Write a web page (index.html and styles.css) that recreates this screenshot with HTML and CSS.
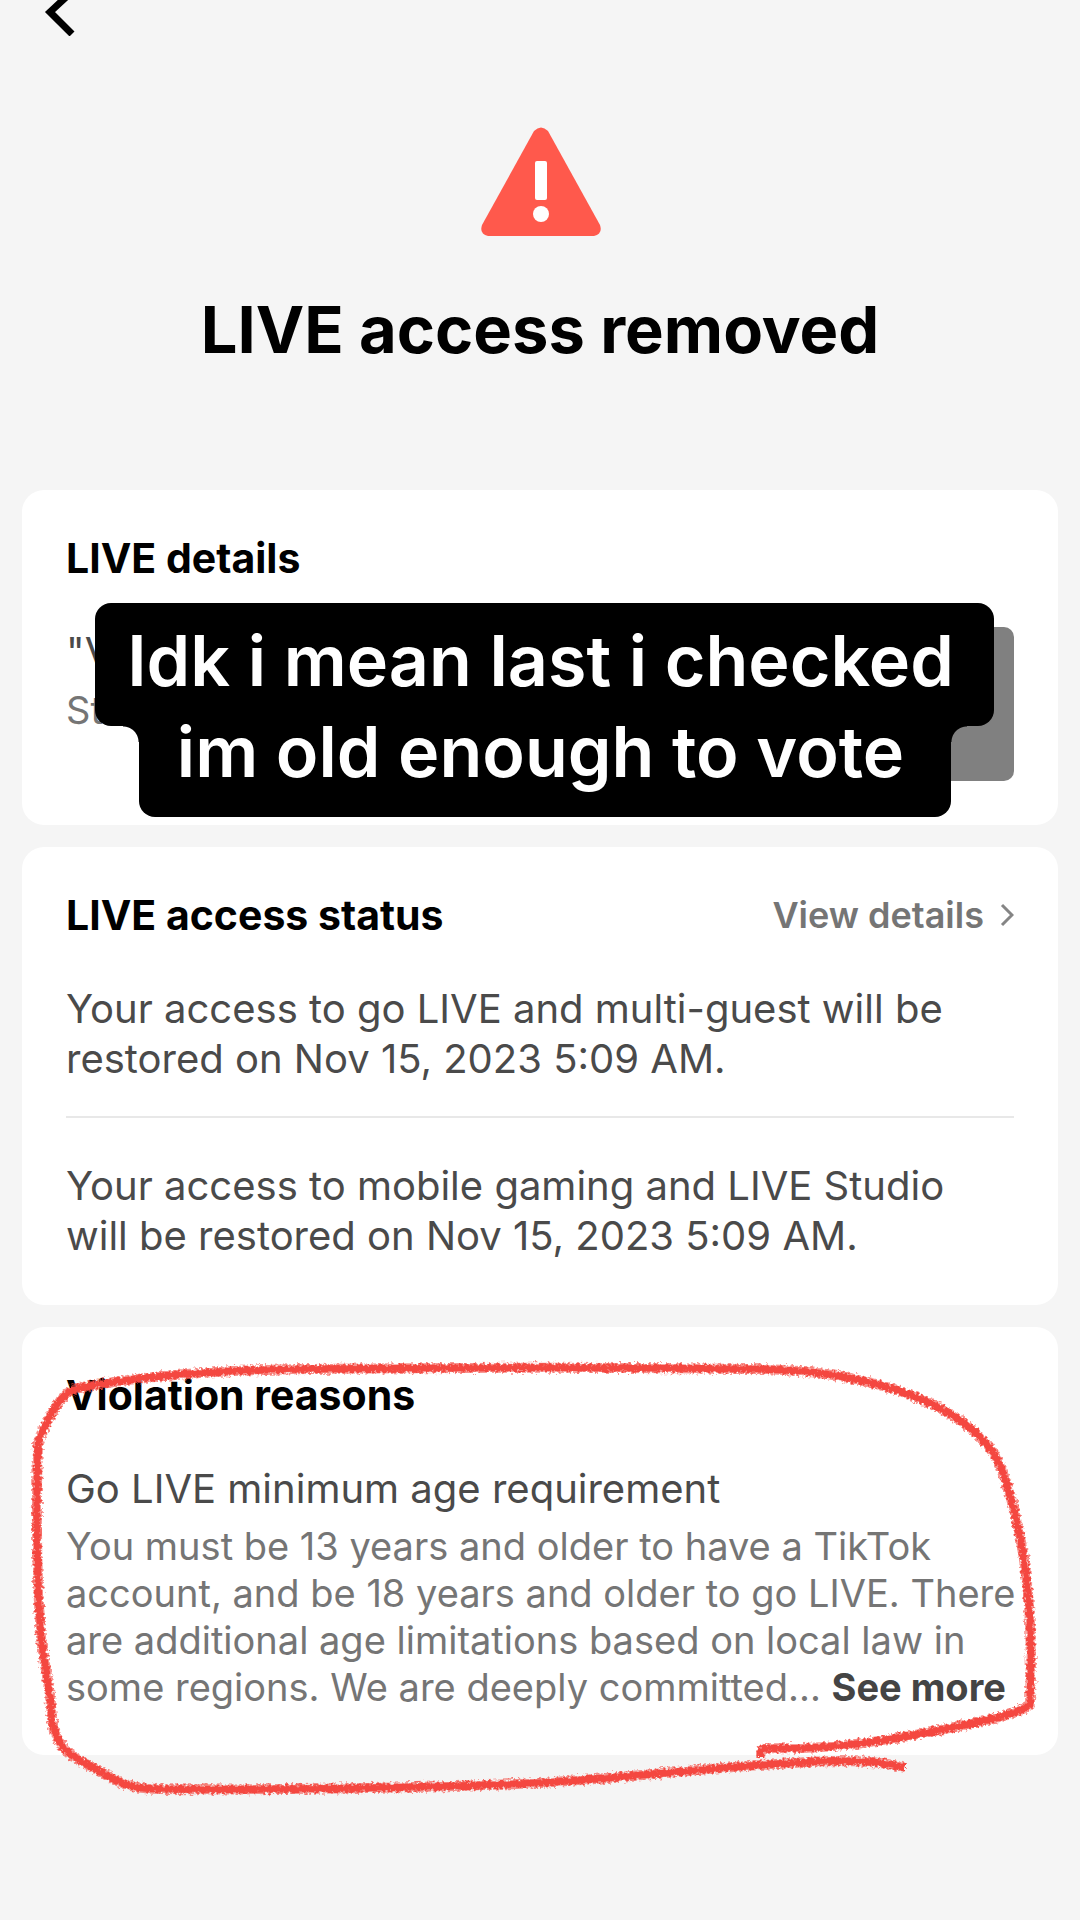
FILE: index.html
```html
<!DOCTYPE html>
<html lang="en">
<head>
<meta charset="utf-8">
<meta name="viewport" content="width=device-width, initial-scale=1">
<title>LIVE access removed</title>
<link rel="stylesheet" href="styles.css">
</head>
<body>
<header class="topbar">
  <button class="back" type="button" aria-label="Back">
    <svg viewBox="0 0 36 60" width="36" height="60" aria-hidden="true"><path d="M33 11 6 36 28 58" fill="none" stroke="#000" stroke-width="7"/></svg>
  </button>
</header>
<main class="page">
  <section class="hero">
    <svg class="hero-icon" viewBox="0 0 122 110" width="122" height="110" aria-hidden="true">
      <path d="M55 4Q62-3 69 4L121 98Q124 107 115 109H9Q0 107 3 98Z" fill="#ff594c"/>
      <rect x="56" y="34" width="12" height="39" rx="2" fill="#fff"/>
      <circle cx="62" cy="87" r="8" fill="#fff"/>
    </svg>
    <h1 class="hero-title">LIVE access removed</h1>
  </section>

  <section class="card details">
    <h2 class="card-title">LIVE details</h2>
    <div class="live">
      <div class="live-text">
        <p class="live-name">"V</p>
        <p class="live-time">St</p>
      </div>
      <div class="live-thumb"></div>
    </div>
    <div class="caption">
      <span class="caption-line caption-first">Idk i mean last i checked</span>
      <span class="caption-line caption-second">im old enough to vote</span>
    </div>
  </section>

  <section class="card status">
    <div class="card-head">
      <h2 class="card-title">LIVE access status</h2>
      <a class="view" href="#details">View details
        <svg viewBox="0 0 14 24" width="14" height="24" aria-hidden="true"><path d="M2 2 12 12 2 22" fill="none" stroke="#858585" stroke-width="3"/></svg>
      </a>
    </div>
    <p class="body">Your access to go LIVE and multi-guest will be<br>restored on Nov 15, 2023 5:09 AM.</p>
    <hr class="rule">
    <p class="body">Your access to mobile gaming and LIVE Studio<br>will be restored on Nov 15, 2023 5:09 AM.</p>
  </section>

  <section class="card reasons">
    <h2 class="card-title">Violation reasons</h2>
    <h3 class="reason">Go LIVE minimum age requirement</h3>
    <p class="note">You must be 13 years and older to have a TikTok<br>account, and be 18 years and older to go LIVE. There<br>are additional age limitations based on local law in<br>some regions. We are deeply committed... <a class="more" href="#more">See more</a></p>
    <svg class="marker" viewBox="22 1327 1036 429" aria-hidden="true">
      <defs>
        <filter id="crayon" filterUnits="userSpaceOnUse" x="22" y="1350" width="1036" height="460">
          <feTurbulence type="fractalNoise" baseFrequency="0.35" numOctaves="2" seed="4" result="n"/>
          <feDisplacementMap in="SourceGraphic" in2="n" scale="7" xChannelSelector="R" yChannelSelector="G"/>
        </filter>
        <path id="loop" d="M760 1757Q761 1748 766 1748C822 1750 884 1744 1000 1717Q1030 1708 1030 1704C1031 1660 1036 1560 1000 1465C975 1410 880 1369 746 1369C600 1367 413 1368 310 1369C200 1370 130 1378 79 1388C62 1391 52 1410 38 1442C36 1510 36 1570 41 1637C44 1665 51 1690 52 1720C56 1750 74 1758 103 1773C122 1785 131 1788 158 1789C260 1790 400 1789 540 1783C640 1777 740 1764 833 1761C865 1761 885 1762 905 1768"/>
      </defs>
      <g fill="none" stroke="#f4473f" stroke-linejoin="round" filter="url(#crayon)">
        <use href="#loop" stroke-width="7"/>
        <use href="#loop" stroke-width="10" stroke-opacity=".6"/>
      </g>
    </svg>
  </section>
</main>
</body>
</html>
```
FILE: styles.css
```css
* { box-sizing: border-box; }
body {
  margin: 0;
  background: #f5f5f5;
  color: #000;
  font-family: Inter, "Liberation Sans", sans-serif;
  overflow-x: hidden;
}
h1, h2, h3, p { margin: 0; }
a { text-decoration: none; }

.topbar { height: 36px; padding: 0 44px; overflow: hidden; display: flex; align-items: flex-end; }
.back { display: block; padding: 0; border: 0; background: none; line-height: 0; }

.page { padding: 0 22px 164px; display: flex; flex-direction: column; gap: 22px; }
.hero { padding-top: 91px; height: 432px; display: flex; flex-direction: column; align-items: center; gap: 53px; }
.hero-title { font-size: 65px; line-height: 80px; font-weight: 700; }

.card { position: relative; background: #fff; border-radius: 22px; padding: 44px; }
.card-title { font-size: 41px; line-height: 48px; font-weight: 700; }
.card-head { display: flex; justify-content: space-between; align-items: center; }

.live { display: flex; justify-content: space-between; margin-top: 45px; }
.live-text { display: flex; flex-direction: column; gap: 10px; }
.live-name { font-size: 40px; line-height: 50px; color: #4a4a4a; }
.live-time { font-size: 38px; line-height: 47px; color: #757575; }
.live-thumb { width: 116px; height: 154px; border-radius: 10px; background: #808080; }

.caption {
  position: absolute;
  top: 113px;
  left: 73px;
  right: 64px;
  z-index: 1;
  display: flex;
  flex-direction: column;
  align-items: center;
  color: #fff;
  font-size: 70px;
  line-height: 91px;
  font-weight: 600;
}
.caption-line { background: #000; border-radius: 16px; text-align: center; white-space: nowrap; }
.caption-first { align-self: stretch; padding: 12px 8px 20px 0; }
.caption-second { position: relative; width: 812px; max-width: 100%; margin-top: -20px; padding: 0 8px 20px 0; }
.caption-second::before, .caption-second::after {
  content: "";
  position: absolute;
  top: 20px;
  width: 16px;
  height: 16px;
}
.caption-second::before { left: -16px; background: radial-gradient(circle at 0 100%, transparent 15px, #000 16px); }
.caption-second::after { right: -16px; background: radial-gradient(circle at 100% 100%, transparent 15px, #000 16px); }

.view { display: flex; align-items: center; gap: 16px; color: #757575; font-size: 36px; line-height: 48px; font-weight: 600; }
.body { margin-top: 45px; font-size: 40px; line-height: 50px; color: #4a4a4a; }
.rule { height: 2px; margin: 32px 0 0; border: 0; background: #e8e8e8; }
.rule + .body { margin-top: 43px; }

.reason { margin-top: 45px; font-size: 40px; line-height: 50px; font-weight: 400; color: #4a4a4a; }
.note { margin-top: 9px; font-size: 38px; line-height: 47px; color: #757575; white-space: nowrap; }
.more { color: #444; font-weight: 700; }
.marker { position: absolute; left: 0; top: 0; width: 100%; height: auto; overflow: visible; pointer-events: none; }
```
